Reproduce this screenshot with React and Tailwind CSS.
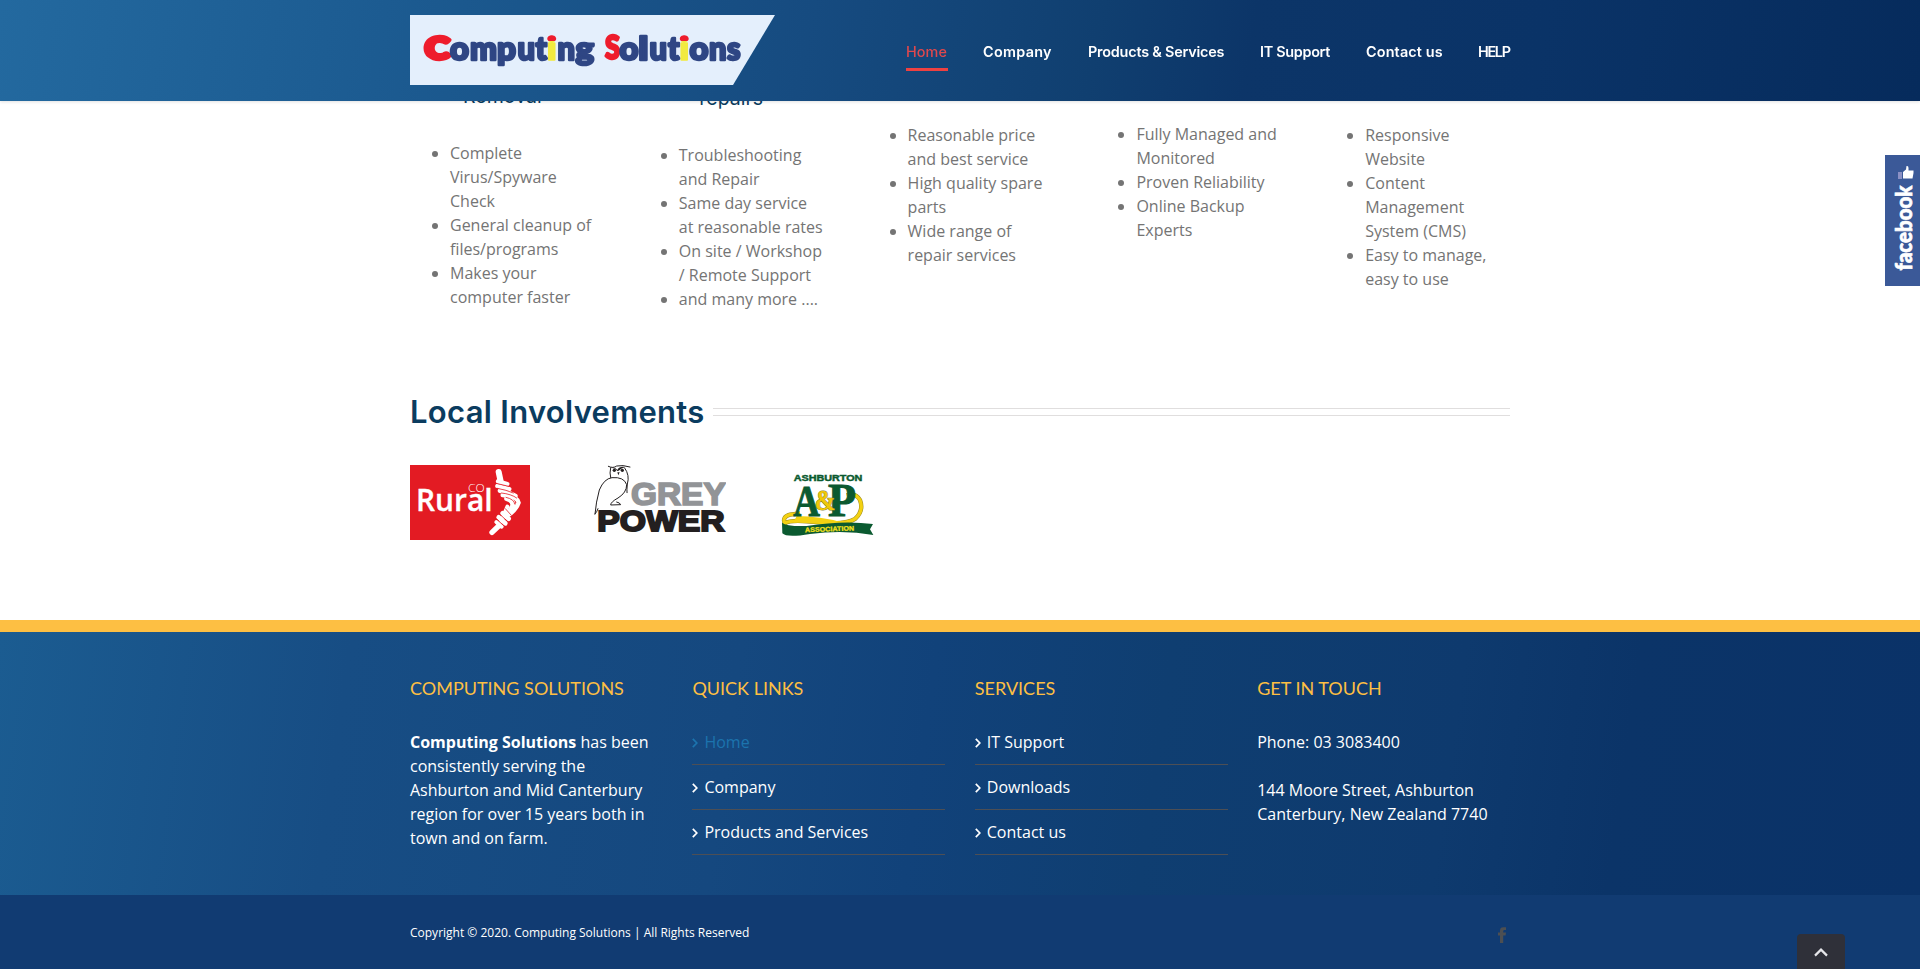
import React from "react";

const columns = [
  {
    pad: "pt-[84px]",
    heading: "Removal",
    items: ["Complete Virus/Spyware Check", "General cleanup of files/programs", "Makes your computer faster"],
  },
  {
    pad: "pt-[86px]",
    heading: "repairs",
    items: ["Troubleshooting and Repair", "Same day service at reasonable rates", "On site / Workshop / Remote Support", "and many more ...."],
  },
  {
    pad: "pt-[123px]",
    items: ["Reasonable price and best service", "High quality spare parts", "Wide range of repair services"],
  },
  {
    pad: "pt-[122px]",
    items: ["Fully Managed and Monitored", "Proven Reliability", "Online Backup Experts"],
  },
  {
    pad: "pt-[123px]",
    items: ["Responsive Website", "Content Management System (CMS)", "Easy to manage, easy to use"],
  },
];

const nav = [
  { label: "Home", style: "w-[42px] tracking-[0.1px]", active: true },
  { label: "Company", style: "w-[70px] tracking-[0.3px]" },
  { label: "Products & Services", style: "w-[137px] tracking-[-0.2px]" },
  { label: "IT Support", style: "w-[71px] tracking-[-0.3px]" },
  { label: "Contact us", style: "w-[77px] tracking-[0.15px]" },
  { label: "HELP", style: "w-[32px] tracking-[-1.3px]" },
];

// [character, left edge, width, fill]
const BLUE = "#2f4684";
const RED = "#ee1c2c";
const I = "url(#iFill)";
const logoLetters = [
  ["C", 15, 24.5, RED], ["o", 40, 19, BLUE], ["m", 60, 27, BLUE], ["p", 87, 19, BLUE],
  ["u", 107.5, 17.5, BLUE], ["t", 125.5, 11.5, BLUE], ["i", 136.5, 10.5, I], ["n", 147.5, 17.5, BLUE],
  ["g", 165.5, 18.5, BLUE], ["S", 195, 15, RED], ["o", 209.5, 19, BLUE], ["l", 228.3, 10.2, BLUE],
  ["u", 239.5, 17.5, BLUE], ["t", 258, 11.5, BLUE], ["i", 269, 10.5, I], ["o", 279.5, 19, BLUE],
  ["n", 299, 17.5, BLUE], ["s", 317, 13.5, BLUE],
];

function BrandLogo() {
  return (
    <svg width="366" height="70" viewBox="0 0 366 70" className="block">
      <defs>
        <linearGradient id="iFill" gradientUnits="userSpaceOnUse" x1="0" y1="0" x2="0" y2="70">
          <stop offset="0.375" stopColor={RED} />
          <stop offset="0.375" stopColor="#f2ea40" />
        </linearGradient>
      </defs>
      <polygon points="0,0 365,0 323,70 0,70" fill="#e4effc" />
      {logoLetters.map(([ch, x, w, fill], i) => (
        <text
          key={i}
          x={x}
          y={ch === "C" || ch === "S" ? 43.6 : 44.6}
          textLength={w}
          lengthAdjust="spacingAndGlyphs"
          fill={fill}
          stroke={fill}
          strokeWidth={fill === I ? 1.6 : ch === "C" ? 4.4 : 2.6}
          strokeLinejoin="round"
          fontSize={ch === "C" ? 29.5 : ch === "S" ? 31.5 : 33}
          fontWeight="900"
          fontFamily="Lato, sans-serif"
        >
          {ch}
        </text>
      ))}
    </svg>
  );
}

function RuralLogo() {
  return (
    <svg width="120" height="75" viewBox="30 255 360 225" className="block">
      <rect x="30" y="255" width="360" height="225" fill="#e31b23" />
      <text x="48" y="394" fontSize="92" fontFamily="'Open Sans', sans-serif" fontWeight="600" fill="#fff" stroke="#fff" strokeWidth="1" textLength="230" lengthAdjust="spacingAndGlyphs">Rural</text>
      <text x="204" y="337" fontSize="35" fontFamily="'Open Sans', sans-serif" fontWeight="300" fill="#fff" textLength="50" lengthAdjust="spacingAndGlyphs">CO</text>
      <g fill="none" stroke="#fff" strokeLinecap="round" strokeLinejoin="round">
        <path d="M296 276 L302 304" strokeWidth="18" />
        <path d="M294 304 L322 312" strokeWidth="13" />
        <path d="M292 318 L328 327" strokeWidth="13" />
        <path d="M300 332 Q330 338 346 348" strokeWidth="14" />
        <path d="M308 345 Q354 350 356 368 Q350 386 330 402" strokeWidth="13" />
        <path d="M320 356 Q342 362 338 378 L320 410" strokeWidth="15" />
        <path d="M322 380 L304 424" strokeWidth="12" />
        <path d="M308 400 L326 416" strokeWidth="14" />
        <path d="M296 412 L316 430" strokeWidth="14" />
        <path d="M289 426 L305 440" strokeWidth="12" />
        <path d="M296 438 L276 457" strokeWidth="16" />
      </g>
      <g fill="none" stroke="#e31b23" strokeWidth="2.4" strokeLinecap="round">
        <path d="M288 310 L326 319 M292 325 Q320 330 340 339 M304 339 Q334 342 350 354 M318 352 Q344 358 344 372" />
        <path d="M316 386 L334 406 M302 405 L322 424 M292 419 L310 436" />
      </g>
    </svg>
  );
}

function GreyPowerLogo() {
  return (
    <svg width="133" height="75" viewBox="579 255 399 225" className="block">
      <text x="693" y="374" fontSize="93" fontFamily="'Liberation Sans', sans-serif" fontWeight="700" fill="#929497" stroke="#929497" strokeWidth="5" textLength="284" lengthAdjust="spacingAndGlyphs">GREY</text>
      <text x="592" y="453" fontSize="90" fontFamily="'Liberation Sans', sans-serif" fontWeight="700" fill="#231f20" stroke="#231f20" strokeWidth="6" textLength="382" lengthAdjust="spacingAndGlyphs">POWER</text>
      <g fill="none" stroke="#231f20" strokeWidth="3" strokeLinecap="round">
        <path d="M625 259 Q640 266 650 258 Q668 254 690 261" />
        <path d="M632 263 Q628 280 632 293" />
        <path d="M674 264 Q690 286 682 312 Q680 330 681 338" />
        <path d="M585 402 Q588 366 598 330 Q612 296 636 293 Q672 290 680 314 Q680 338 654 354 Q632 366 632 375 L662 374 Q660 368 650 366" />
        <path d="M585 402 Q592 394 594 386" />
      </g>
      <path d="M634 263 Q646 260 652 270 Q658 258 676 261 Q664 264 656 272 L652 273 Q646 264 634 263Z M652 277 L659 277 L655 286Z" fill="#231f20" />
      <circle cx="643" cy="271" r="5" fill="#231f20" />
      <circle cx="667" cy="271" r="5" fill="#231f20" />
    </svg>
  );
}

function ShowLogo() {
  return (
    <svg width="100" height="75" viewBox="1140 255 300 225" className="block">
      <text x="1181" y="304" fontSize="28" fontFamily="'Liberation Sans', sans-serif" fontWeight="700" fill="#0b5a30" stroke="#0b5a30" strokeWidth="1.4" textLength="206" lengthAdjust="spacingAndGlyphs">ASHBURTON</text>
      <path d="M1340 346 Q1366 336 1380 360 Q1392 392 1366 416 Q1350 428 1300 430 L1220 424 Q1170 420 1154 430 Q1146 410 1170 404 L1200 400" fill="none" stroke="#9a8a20" strokeWidth="13" />
      <path d="M1340 346 Q1366 336 1380 360 Q1392 392 1366 416 Q1350 428 1300 430 L1220 424 Q1170 420 1154 430 Q1146 410 1170 404 L1200 400" fill="none" stroke="#f3d112" strokeWidth="10" />
      <path d="M1190 408 Q1260 408 1330 428 L1300 438 Q1240 426 1180 428 Z" fill="#f3d112" />
      <text x="1180" y="407" fontSize="134" fontFamily="'Liberation Serif', serif" fontWeight="700" fill="#0b5a30" stroke="#0b5a30" strokeWidth="3" textLength="80" lengthAdjust="spacingAndGlyphs">A</text>
      <text x="1284" y="407" fontSize="137" fontFamily="'Liberation Serif', serif" fontWeight="700" fill="#0b5a30" stroke="#0b5a30" strokeWidth="3" textLength="84" lengthAdjust="spacingAndGlyphs">P</text>
      <text x="1244" y="390" fontSize="86" fontFamily="'Liberation Serif', serif" fontWeight="700" fill="#f0c808" stroke="#7a7a1c" strokeWidth="3" paintOrder="stroke" textLength="62" lengthAdjust="spacingAndGlyphs">&amp;</text>
      <path d="M1146 428 Q1160 440 1220 438 Q1330 420 1419 432 L1410 448 L1420 465 Q1330 448 1230 462 Q1160 474 1147 460 Z" fill="#0b5a30" />
      <text x="1215" y="454" fontSize="20" fontFamily="'Liberation Sans', sans-serif" fontWeight="700" fill="#f6e11a" stroke="#f6e11a" strokeWidth="0.8" textLength="147" lengthAdjust="spacingAndGlyphs" transform="rotate(-2 1288 445)">ASSOCIATION</text>
    </svg>
  );
}

function FacebookTab() {
  return (
    <div className="fixed right-0 top-[155px] z-20 h-[131px] w-[35px] bg-[#3b5998]">
      <svg width="35" height="131" viewBox="0 0 35 131" className="block">
        <text transform="translate(27 115.5) rotate(-90)" fontSize="22" fontWeight="900" fontFamily="Lato, sans-serif" fill="#fff" stroke="#fff" strokeWidth="0.7" textLength="85" lengthAdjust="spacingAndGlyphs">facebook</text>
        <rect x="13" y="17" width="4" height="7" fill="#8b90c4" />
        <path d="M18 17 L21 14.5 L21.5 11 Q23.5 10.5 23.5 13 V15.5 H28.5 V18 L27.5 23.5 H18Z" fill="#fff" />
      </svg>
    </div>
  );
}

function Chevron() {
  return (
    <svg width="6" height="10" viewBox="0 0 6 10" className="mt-[2px] shrink-0" fill="none" stroke="currentColor" strokeWidth="1.7">
      <path d="M0.8 0.8 L4.8 5 L0.8 9.2" />
    </svg>
  );
}

function LinkList({ title, links }) {
  return (
    <div>
      <FooterTitle>{title}</FooterTitle>
      <ul className="-mt-[10px] text-white">
        {links.map((l) => (
          <li key={l} className={`flex h-[45px] items-start border-b border-[#4d4f55] pt-[10px] ${l === "Home" ? "text-[#1c74ae]" : ""}`}>
            <span className="flex h-6 items-center gap-[6px]"><Chevron />{l}</span>
          </li>
        ))}
      </ul>
    </div>
  );
}

function FooterTitle({ children }) {
  return <h4 className="mb-[30px] h-[24px] whitespace-nowrap font-['Lato',sans-serif] text-[18px] leading-[24px] text-[#fdbf43]">{children}</h4>;
}

export default function App() {
  return (
    <div className="h-[969px] overflow-hidden bg-white font-['Open_Sans',sans-serif] text-[16px] leading-[24px]">
      <header className="fixed inset-x-0 top-0 z-10 h-[101px] bg-[linear-gradient(100deg,#23699f_0%,#1c5b91_20%,#164b80_42%,#103f70_57%,#0c3568_65%,#0a3367_80%,#062b5c_100%)] shadow-[0_1px_3px_rgba(0,0,0,0.12)]">
        <div className="mx-auto flex h-full w-[1100px] justify-between pt-[15px]">
          <BrandLogo />
          <nav className="flex gap-[35px] pt-[25px] font-['Inter',sans-serif] text-[14.4px] font-semibold leading-[24px] text-white">
            {nav.map((n) => (
              <a key={n.label} className={`${n.style} h-[31px] whitespace-nowrap ${n.active ? "border-b-[3px] border-[#ee4141] font-medium text-[#e0484d]" : ""}`}>{n.label}</a>
            ))}
          </nav>
        </div>
      </header>

      <main className="mx-auto h-[620px] w-[1100px]">
        <div className="grid h-[391px] grid-cols-5 gap-x-[44px]">
          {columns.map((c, i) => (
            <section key={i} className={c.pad}>
              {c.heading && (
                <h3 className="mb-[33px] h-[24px] text-center font-['Inter',sans-serif] text-[19.5px] leading-[24px] text-[#0b3c5f]">{c.heading}</h3>
              )}
              <ul className="list-disc pl-[40px] text-[#747474]">
                {c.items.map((t) => <li key={t}>{t}</li>)}
              </ul>
            </section>
          ))}
        </div>
        <div className="flex h-[42px] items-center">
          <h2 className="w-[303px] whitespace-nowrap font-['Inter',sans-serif] text-[31px] font-semibold leading-[42px] tracking-[0.3px] text-[#0b3c5f]">Local Involvements</h2>
          <div className="h-[8px] flex-1 border-y border-[#e0dede]" />
        </div>
        <div className="flex pt-[32px]">
          <RuralLogo />
          <div className="ml-[63px]"><GreyPowerLogo /></div>
          <div className="ml-[54px]"><ShowLogo /></div>
        </div>
      </main>

      <footer>
        <div className="h-[275px] border-t-[12px] border-[#fdbf43] bg-[linear-gradient(98deg,#1b5c91_0%,#174d84_18%,#15487f_38%,#11427a_48%,#0f3e71_60%,#0e3a6e_75%,#0b3468_84%,#0a3268_100%)]">
          <div className="mx-auto grid w-[1100px] grid-cols-[253px_253px_253px_253px] gap-x-[29.4px] pt-[44px] text-white">
            <div>
              <FooterTitle>COMPUTING SOLUTIONS</FooterTitle>
              <p><b className="font-bold">Computing Solutions</b> has been<br />consistently serving the<br />Ashburton and Mid Canterbury<br />region for over 15 years both in<br />town and on farm.</p>
            </div>
            <LinkList title="QUICK LINKS" links={["Home", "Company", "Products and Services"]} />
            <LinkList title="SERVICES" links={["IT Support", "Downloads", "Contact us"]} />
            <div>
              <FooterTitle>GET IN TOUCH</FooterTitle>
              <p className="whitespace-nowrap">Phone: 03 3083400<br /><br />144 Moore Street, Ashburton<br />Canterbury, New Zealand 7740</p>
            </div>
          </div>
        </div>
        <div className="h-[74px] bg-[#113b72]">
          <div className="mx-auto flex w-[1100px] justify-between pt-[26px] text-[12px] leading-[24px] text-white">
            <span>Copyright © 2020. Computing Solutions | All Rights Reserved</span>
            <svg width="8" height="16" viewBox="0 0 8 16" className="mr-1 mt-[6px]" fill="#4d4f52">
              <path d="M2 16 V8.6 H0 V5.6 H2 V3.6 Q2 0.2 5.2 0.2 H8 V3 H6.4 Q5.2 3 5.2 4.2 V5.6 H8 L7.6 8.6 H5.2 V16Z" />
            </svg>
          </div>
        </div>
      </footer>

      <FacebookTab />
      <div className="fixed bottom-0 right-[75px] z-20 flex h-[35px] w-[48px] justify-center rounded-t-[4px] bg-[#2f3039] pt-[14px]">
        <svg width="14" height="9" viewBox="0 0 14 9" fill="none" stroke="#e6e6ea" strokeWidth="2.2"><path d="M1 7.6 L7 1.6 L13 7.6" /></svg>
      </div>
    </div>
  );
}
